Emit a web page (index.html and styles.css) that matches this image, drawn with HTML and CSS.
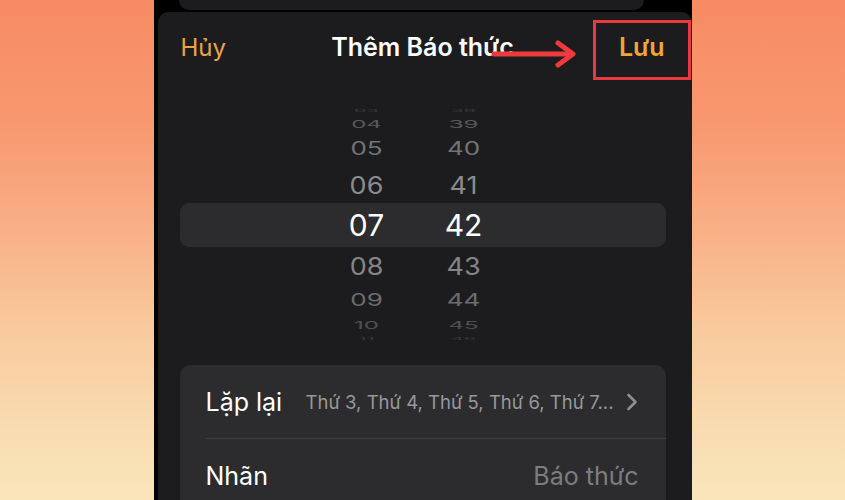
FILE: index.html
```html
<!DOCTYPE html>
<html lang="vi">

<head>
    <meta charset="UTF-8">
    <meta name="viewport" content="width=device-width, initial-scale=1.0">
    <title>Thêm Báo thức</title>

    <link rel="stylesheet" href="styles.css">
</head>

<body>
    <div class="phone">
        <div class="peek"></div>

        <div class="sheet">
            <div class="header">
                <div class="btn-cancel">Hủy</div>
                <div class="title">Thêm Báo thức</div>
                <div class="btn-save">Lưu</div>
            </div>

            <div class="picker">
                <div class="wheel-row r-edge"><span>03</span><span>38</span></div>
                <div class="wheel-row r-far"><span>04</span><span>39</span></div>
                <div class="wheel-row r-mid"><span>05</span><span>40</span></div>
                <div class="wheel-row r-near"><span>06</span><span>41</span></div>
                <div class="wheel-row selected"><span>07</span><span>42</span></div>
                <div class="wheel-row r-near2"><span>08</span><span>43</span></div>
                <div class="wheel-row r-mid2"><span>09</span><span>44</span></div>
                <div class="wheel-row r-far2"><span>10</span><span>45</span></div>
                <div class="wheel-row r-edge2"><span>11</span><span>46</span></div>
            </div>

            <div class="options">
                <div class="option-row">
                    <div class="option-label">Lặp lại</div>
                    <div class="option-value repeat">Thứ 3, Thứ 4, Thứ 5, Thứ 6, Thứ 7...</div>
                    <svg class="chevron" width="12" height="18" viewBox="0 0 12 18">
                        <path d="M2.5 2 L9.5 9 L2.5 16" fill="none" stroke="#8d8d92" stroke-width="2.6"
                            stroke-linecap="round" stroke-linejoin="round" />
                    </svg>
                </div>
                <div class="option-row">
                    <div class="option-label">Nhãn</div>
                    <div class="option-value">Báo thức</div>
                </div>
            </div>
        </div>

        <!-- red highlight around the save button -->
        <svg class="arrow" width="92" height="34" viewBox="0 0 92 34">
            <path d="M5 16 H82" stroke="#ee3a3c" stroke-width="5" stroke-linecap="round" />
            <path d="M69 5 L84 16 L69 27" fill="none" stroke="#ee3a3c" stroke-width="5"
                stroke-linecap="round" stroke-linejoin="round" />
        </svg>
        <div class="mark-box"></div>
    </div>
</body>

</html>
```

FILE: styles.css
```css
body {
    margin: 0;
    height: 500px;
    overflow: hidden;
    background: linear-gradient(to bottom, #f78b63 0%, #f89870 25%, #f9ae85 45%, #f8c99c 65%, #f9dbb0 85%, #fae5ba 100%);
    font-family: Inter, "Noto Sans", sans-serif;
}

.phone {
    position: relative;
    width: 538px;
    height: 500px;
    margin: 0 auto;
    background-color: #000;
    overflow: hidden;
}

.peek {
    height: 10px;
    margin: 0 48px 0 25px;
    background-color: #1c1c1e;
    border-radius: 0 0 12px 12px;
}

.sheet {
    margin: 2px 0 0 4px;
    height: 490px;
    background-color: #1c1c1e;
    border-radius: 11px 11px 0 0;
}

.header {
    display: grid;
    grid-template-columns: 1fr auto 1fr;
    align-items: center;
    height: 70px;
    padding: 0 27px 0 23px;
    font-size: 25px;
}

.btn-cancel {
    color: #eba43f;
    font-size: 24px;
}

.title {
    color: #fff;
    font-weight: 600;
}

.btn-save {
    color: #efa735;
    font-weight: 600;
    text-align: right;
}

/* time wheel */
.picker {
    margin: 23px 26px 0 22px;
}

.wheel-row {
    display: flex;
    align-items: center;
    padding-left: 157px;
    gap: 37px;
    border-radius: 9px;
}

.wheel-row span {
    width: 60px;
    text-align: center;
    line-height: 1;
}

.selected {
    height: 44px;
    background-color: #2c2c2e;
    font-size: 30px;
    color: #fff;
}

.r-edge {
    height: 12px;
    font-size: 20px;
    color: #3c3c3e;
}

.r-edge span {
    transform: scaleY(0.18);
}

.r-far {
    height: 14px;
    font-size: 24px;
    color: #58585a;
}

.r-far span {
    transform: scaleY(0.45);
}

.r-mid {
    height: 36px;
    font-size: 26px;
    color: #737375;
}

.r-mid span {
    transform: scaleY(0.7);
}

.r-near {
    height: 36px;
    font-size: 27px;
    color: #8a8a8c;
}

.r-near span {
    transform: scaleY(0.88);
}

.r-near2 {
    height: 38px;
    font-size: 27px;
    color: #858587;
}

.r-near2 span {
    transform: scaleY(0.88);
}

.r-mid2 {
    height: 30px;
    font-size: 26px;
    color: #6c6c6e;
}

.r-mid2 span {
    transform: scaleY(0.68);
}

.r-far2 {
    height: 20px;
    font-size: 24px;
    color: #505052;
}

.r-far2 span {
    transform: scaleY(0.45);
}

.r-edge2 {
    height: 8px;
    font-size: 20px;
    color: #38383a;
}

.r-edge2 span {
    transform: scaleY(0.18);
}

/* settings list */
.options {
    margin: 22px 26px 0 22px;
    padding-left: 26px;
    background-color: #2c2c2e;
    border-radius: 11px;
}

.option-row {
    display: flex;
    align-items: center;
    height: 73px;
    padding-right: 27px;
    border-bottom: 1px solid #3d3d3f;
}

.option-row:last-child {
    border-bottom: 0;
}

.option-label {
    font-size: 25px;
    color: #fff;
}

.option-value {
    margin-left: auto;
    font-size: 25px;
    color: #7d7d81;
}

.repeat {
    font-size: 18.5px;
    color: #98989c;
    margin-right: 12px;
}

.chevron {
    display: block;
    margin-right: 1px;
}

.arrow {
    position: absolute;
    left: 335px;
    top: 38px;
}

.mark-box {
    position: absolute;
    left: 439px;
    top: 20px;
    width: 92px;
    height: 54px;
    border: 3px solid #e8393d;
}
```
